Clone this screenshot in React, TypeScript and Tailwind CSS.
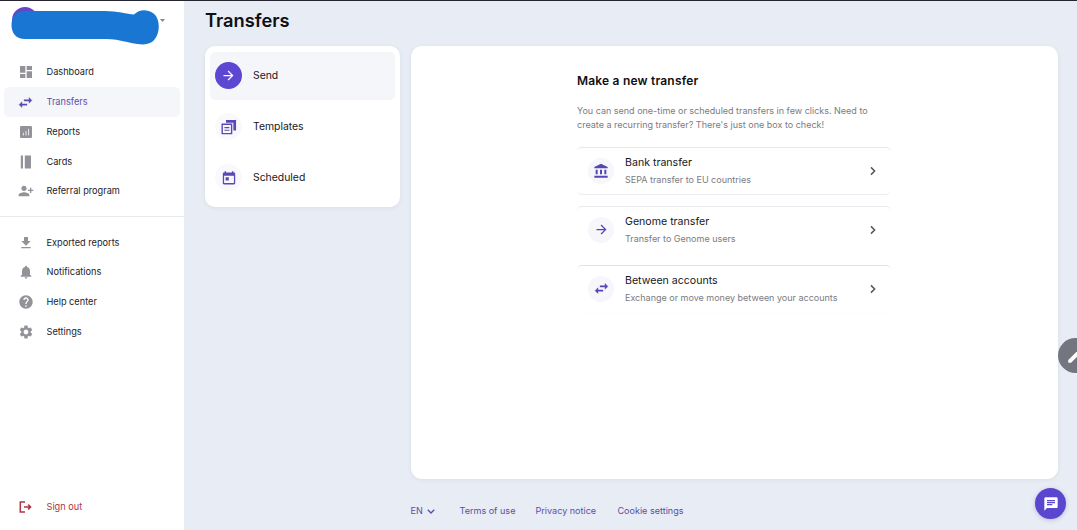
import type { ReactNode } from "react";
import {
  MdAccountBalance,
  MdArrowForward,
  MdChat,
  MdDashboard,
  MdEdit,
  MdFileDownload,
  MdHelp,
  MdNotifications,
  MdPersonAddAlt1,
  MdSettings,
} from "react-icons/md";

function SwapIcon() {
  return (
    <svg viewBox="0 0 24 24" className="size-[17px]" fill="currentColor" stroke="currentColor" strokeWidth="0.6">
      <path d="M6.99 11 3 15l3.990 4v-3H14v-2H6.990zM21 9l-3.990-4v3H10v2h7.010v3z" />
    </svg>
  );
}

function ReportsIcon() {
  return (
    <svg viewBox="0 0 12 12" className="size-3">
      <rect width="12" height="12" rx="1.3" fill="currentColor" />
      <path d="M3.4 6.8v2.6M6 5v4.4M8.6 2.8v6.6" stroke="#e9e9ef" strokeWidth="1" />
    </svg>
  );
}

function CardsIcon() {
  return (
    <svg viewBox="0 0 12 14" className="h-3.5 w-3" fill="currentColor">
      <rect x="0.8" y="0.5" width="2.2" height="13" />
      <rect x="4.8" y="0.5" width="6.2" height="13" />
    </svg>
  );
}

function SignOutIcon() {
  return (
    <svg viewBox="0 0 13 12" className="h-3 w-[13px]" fill="none" stroke="currentColor" strokeWidth="1.5">
      <path d="M6 1H1.3v10H6M5 6h6.5M9.2 3.6 11.6 6 9.2 8.4" />
    </svg>
  );
}

function TemplatesIcon() {
  return (
    <svg viewBox="0 0 16 16" className="size-4" fill="none" stroke="currentColor" strokeWidth="1.4">
      <path d="M1.2 5.2h9.4v9.4H1.2z" />
      <path d="M3.4 8.6h5M3.4 11.2h5" strokeWidth="1.1" />
      <path d="M5 2.3h8.7v9.2" strokeWidth="2.7" />
    </svg>
  );
}

function CalendarIcon() {
  return (
    <svg viewBox="0 0 14 14" className="size-3.5" fill="currentColor">
      <path
        d="M2.6 0.3h1.5v1.3h5.8V0.3h1.5v1.3h.6c.7 0 1.2.5 1.2 1.2v9.4c0 .7-.5 1.2-1.2 1.2H2c-.7 0-1.2-.5-1.2-1.2V2.8c0-.7.5-1.2 1.2-1.2h.6zM2.1 4.8v7.3h9.8V4.8zM3.6 6.3h3.2v3.2H3.6z"
        fillRule="evenodd"
      />
    </svg>
  );
}

function Chevron({ className }: { className: string }) {
  return (
    <svg viewBox="0 0 8 10" className={className} fill="none" stroke="currentColor" strokeWidth="1.5">
      <path d="m2 1.4 3.6 3.6L2 8.6" />
    </svg>
  );
}

type Item = { label: string; icon: ReactNode; active?: boolean };

const primary: Item[] = [
  { label: "Dashboard", icon: <MdDashboard size={16} /> },
  { label: "Transfers", icon: <SwapIcon />, active: true },
  { label: "Reports", icon: <ReportsIcon /> },
  { label: "Cards", icon: <CardsIcon /> },
  { label: "Referral program", icon: <MdPersonAddAlt1 size={16} /> },
];

const secondary: Item[] = [
  { label: "Exported reports", icon: <MdFileDownload size={16} /> },
  { label: "Notifications", icon: <MdNotifications size={16} /> },
  { label: "Help center", icon: <MdHelp size={16} /> },
  { label: "Settings", icon: <MdSettings size={16} /> },
];

function NavItem({ item }: { item: Item }) {
  return (
    <a
      className={`flex h-[29.75px] items-center rounded-[5px] pl-[13px] text-[9.2px] ${
        item.active ? "bg-[#f5f6fa] text-[#5f50a8]" : "text-[#222226]"
      }`}
    >
      <span className={`flex w-[17px] justify-center ${item.active ? "text-[#5b4bb0]" : "text-[#929298]"}`}>
        {item.icon}
      </span>
      <span className="ml-[12.5px] whitespace-nowrap">{item.label}</span>
    </a>
  );
}

function Sidebar() {
  return (
    <aside className="flex w-[184px] shrink-0 flex-col bg-white">
      <div className="h-[56px] shrink-0">
        <svg viewBox="0 0 184 56" className="h-14 w-[184px]">
          <circle cx="25" cy="19" r="13" fill="#6546c9" />
          <path
            d="M25 10H105C117 10 127 13 134 13.500C140 7 151 8 156 15C161 23 159 36 152 41C144 46 133 42 122 40C114 38 108 38 100 38H25C16 38 11.500 32 11.500 24C11.500 16 17 10 25 10Z"
            fill="#1976d2"
          />
          <path d="M160 18h5l-2.5 3z" fill="#85858d" />
        </svg>
      </div>
      <nav className="px-1 pt-[0.5px]">
        {primary.map((item) => (
          <NavItem key={item.label} item={item} />
        ))}
      </nav>
      <hr className="mt-[9.5px] mb-[11px] border-[#e9eaf0]" />
      <nav className="px-1">
        {secondary.map((item) => (
          <NavItem key={item.label} item={item} />
        ))}
      </nav>
      <a className="mt-auto mb-[8px] flex h-[30px] items-center pl-[18.5px] text-[9.2px] text-[#b13345]">
        <SignOutIcon />
        <span className="ml-[15px]">Sign out</span>
      </a>
    </aside>
  );
}

function TransferRow({ icon, title, text, border }: { icon: ReactNode; title: string; text: string; border: string }) {
  return (
    <div className={`flex h-12 w-[314px] items-center rounded-[5px] border-y pr-[14px] pl-[11px] ${border}`}>
      <span className="flex size-[26px] items-center justify-center rounded-full bg-[#f6f6fb] text-[#5546b5]">
        {icon}
      </span>
      <div className="ml-[11px] flex flex-1 flex-col pt-px whitespace-nowrap">
        <span className="text-[10.6px] leading-[17px] text-[#17171b]">{title}</span>
        <span className="text-[9px] leading-[18px] text-[#7b7b81]">{text}</span>
      </div>
      <Chevron className="h-[10px] w-[8px] text-[#55555c]" />
    </div>
  );
}

function MenuItem({ icon, label, active }: { icon: ReactNode; label: string; active?: boolean }) {
  return (
    <a className={`flex h-12 items-center rounded-[5px] pl-[5px] ${active ? "bg-[#f5f6fa]" : ""}`}>
      <span
        className={`flex size-[27px] items-center justify-center rounded-full ${
          active ? "bg-[#5c46d2] text-white" : "bg-[#f9f9fd] text-[#5a48b4]"
        }`}
      >
        {icon}
      </span>
      <span className="ml-[11px] text-[10.4px] text-[#17171b]">{label}</span>
    </a>
  );
}

export default function App() {
  return (
    <div className="relative flex h-[530px] w-[1077px] overflow-hidden border-t border-[#252530] bg-[#e8ecf4] font-['Inter','Liberation_Sans',sans-serif]">
      <Sidebar />
      <main className="flex flex-1 flex-col pl-[21px]">
        <h1 className="h-[45px] pt-[5px] text-[18.3px] leading-[28px] font-semibold text-[#101014]">Transfers</h1>
        <div className="flex items-start gap-[11px]">
          <section className="flex h-[161px] w-[195px] flex-col gap-[3px] rounded-[10px] bg-white px-[5px] pt-[5.500px] shadow-[0_1px_4px_rgba(60,70,110,0.08)]">
            <MenuItem active icon={<MdArrowForward size={15} />} label="Send" />
            <MenuItem icon={<TemplatesIcon />} label="Templates" />
            <MenuItem icon={<CalendarIcon />} label="Scheduled" />
          </section>
          <section className="h-[433px] w-[647px] rounded-[11px] bg-white pl-[166px] shadow-[0_1px_4px_rgba(60,70,110,0.08)]">
            <h2 className="pt-[25.5px] text-[12px] leading-[18px] font-semibold tracking-[0.19px] text-[#101014]">
              Make a new transfer
            </h2>
            <p className="mt-[14.5px] text-[9px] leading-[13.5px] whitespace-nowrap text-[#7b7b81]">
              You can send one-time or scheduled transfers in few clicks. Need to
              <br />
              create a recurring transfer? There's just one box to check!
            </p>
            <div className="mt-[16px] flex flex-col gap-[10.75px]">
              <TransferRow
                border="border-t-[#e6e6ec] border-b-[#ebebf0]"
                icon={<MdAccountBalance size={16} />}
                title="Bank transfer"
                text="SEPA transfer to EU countries"
              />
              <TransferRow
                border="border-t-[#e9e9ee] border-b-[#fdfdfe]"
                icon={<MdArrowForward size={15} />}
                title="Genome transfer"
                text="Transfer to Genome users"
              />
              <TransferRow
                border="border-t-[#e2e2e8] border-b-[#fdfdfe]"
                icon={<SwapIcon />}
                title="Between accounts"
                text="Exchange or move money between your accounts"
              />
            </div>
          </section>
        </div>
        <footer className="mt-[24px] flex h-4 items-center pl-[205.5px] text-[9.05px] whitespace-nowrap text-[#5a4fa6]">
          <span className="w-[13px]">EN</span>
          <Chevron className="ml-[3px] h-[9px] w-[8px] rotate-90" />
          <span className="ml-[25px] w-[76px]">Terms of use</span>
          <span className="w-[82px]">Privacy notice</span>
          <span>Cookie settings</span>
        </footer>
      </main>
      <button className="absolute top-[337px] left-[1058px] flex size-[35px] items-center rounded-full bg-[#74767f] pl-[8px] text-white">
        <MdEdit size={18} />
      </button>
      <button className="absolute top-[487px] left-[1035px] flex size-[31px] items-center justify-center rounded-full bg-[#5a46cf] text-white shadow-[0_1px_4px_rgba(60,50,140,0.25)]">
        <MdChat size={16} />
      </button>
    </div>
  );
}
